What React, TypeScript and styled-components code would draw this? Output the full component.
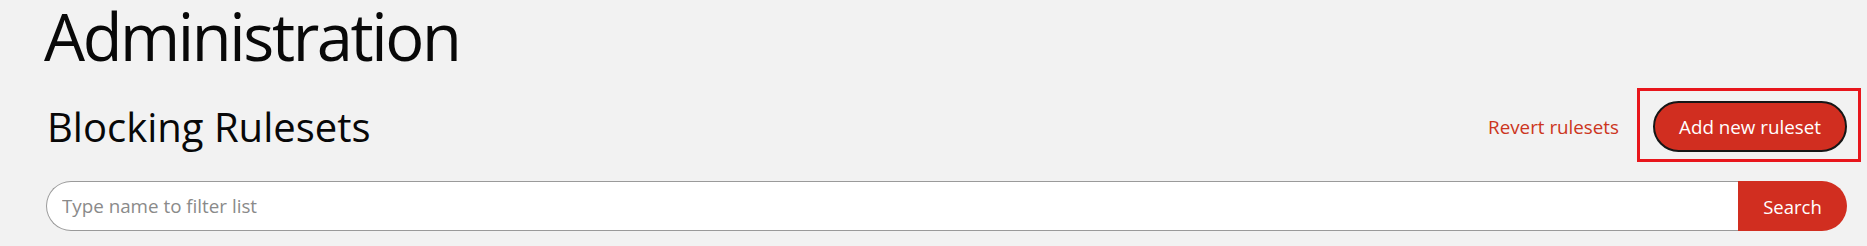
import React from "react";
import styled, { createGlobalStyle } from "styled-components";

const GlobalStyle = createGlobalStyle`
  html, body {
    margin: 0;
    padding: 0;
    background: #f2f2f2;
  }
  body {
    font-family: "Open Sans", "Noto Sans", Arial, sans-serif;
    color: #080808;
  }
  * { box-sizing: border-box; }
`;

const Page = styled.main`
  padding: 0 20px 0 44px;
  display: flex;
  flex-direction: column;
`;

const Title = styled.h1`
  margin: 0;
  font-size: 65px;
  line-height: 72px;
  font-weight: 400;
  letter-spacing: -2.4px;
`;

const HeaderRow = styled.div`
  margin-top: 29px;
  height: 51px;
  display: flex;
  align-items: center;
  justify-content: space-between;
`;

const Subtitle = styled.h2`
  margin: 0 0 0 3px;
  font-size: 40px;
  line-height: 51px;
  font-weight: 400;
`;

const Actions = styled.div`
  display: flex;
  align-items: center;
  gap: 34px;
`;

const LinkButton = styled.button`
  background: none;
  border: none;
  padding: 0;
  font-family: inherit;
  font-size: 18.8px;
  color: #cc3520;
  cursor: pointer;
`;

const Highlight = styled.div`
  position: relative;
  display: flex;
`;

const HighlightFrame = styled.span`
  position: absolute;
  left: -16px;
  top: -13px;
  right: -14px;
  bottom: -10px;
  border: 3px solid #e8161c;
  pointer-events: none;
`;

const PrimaryButton = styled.button`
  height: 51px;
  width: 194px;
  border: 2px solid #161616;
  border-radius: 26px;
  background: #d12e20;
  color: #ffffff;
  font-family: inherit;
  font-size: 18.8px;
  cursor: pointer;
`;

const SearchRow = styled.form`
  margin-top: 29px;
  margin-left: 2px;
  display: flex;
  height: 50px;
`;

const SearchInput = styled.input`
  flex: 1;
  min-width: 0;
  border: 1px solid #9a9a9a;
  border-right: none;
  border-radius: 25px 0 0 25px;
  background: #ffffff;
  padding: 0 0 0 15px;
  font-family: inherit;
  font-size: 18.8px;
  color: #222;
  outline: none;

  &::placeholder {
    color: #8a8a8a;
  }
`;

const SearchButton = styled.button`
  width: 109px;
  border: none;
  border-radius: 0 25px 25px 0;
  background: #d12e20;
  color: #ffffff;
  font-family: inherit;
  font-size: 18.5px;
  cursor: pointer;
`;

export default function App() {
  return (
    <>
      <GlobalStyle />
      <Page>
        <Title>Administration</Title>
        <HeaderRow>
          <Subtitle>Blocking Rulesets</Subtitle>
          <Actions>
            <LinkButton type="button">Revert rulesets</LinkButton>
            <Highlight>
              <PrimaryButton type="button">Add new ruleset</PrimaryButton>
              <HighlightFrame />
            </Highlight>
          </Actions>
        </HeaderRow>
        <SearchRow onSubmit={(e) => e.preventDefault()}>
          <SearchInput type="text" placeholder="Type name to filter list" />
          <SearchButton type="submit">Search</SearchButton>
        </SearchRow>
      </Page>
    </>
  );
}
